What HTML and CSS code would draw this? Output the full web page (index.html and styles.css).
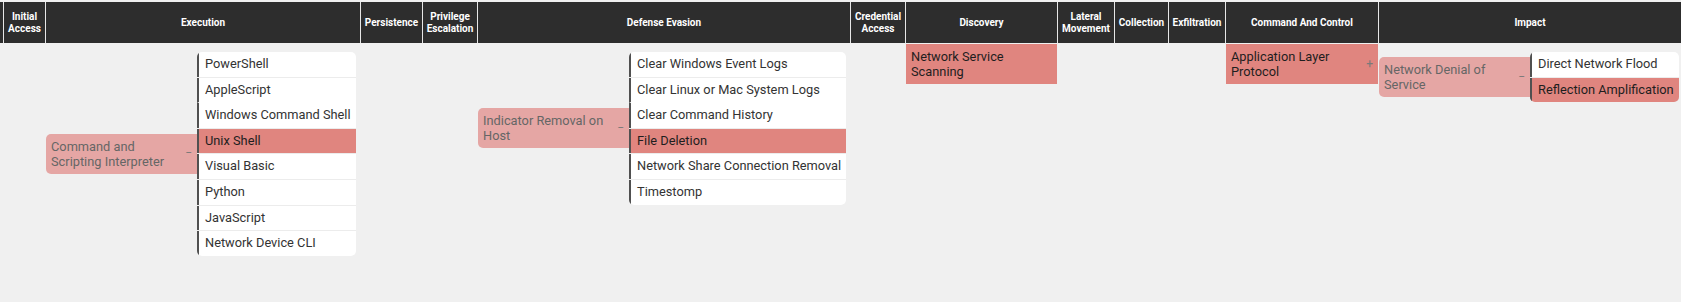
FILE: index.html
```html
<!DOCTYPE html>
<html lang="en">
<head>
  <meta charset="UTF-8">
  <meta name="viewport" content="width=device-width, initial-scale=1.0">
  <title>ATT&amp;CK Matrix</title>
  <link rel="stylesheet" href="styles.css">
</head>
<body>
  <div class="matrix">
    <!-- tactic headers -->
    <div class="tactic-head"></div>
    <div class="tactic-head">Initial Access</div>
    <div class="tactic-head">Execution</div>
    <div class="tactic-head">Persistence</div>
    <div class="tactic-head">Privilege Escalation</div>
    <div class="tactic-head">Defense Evasion</div>
    <div class="tactic-head">Credential Access</div>
    <div class="tactic-head">Discovery</div>
    <div class="tactic-head">Lateral Movement</div>
    <div class="tactic-head">Collection</div>
    <div class="tactic-head">Exfiltration</div>
    <div class="tactic-head">Command And Control</div>
    <div class="tactic-head">Impact</div>

    <!-- techniques -->
    <div class="tactic-cell"></div>
    <div class="tactic-cell"></div>
    <div class="tactic-cell">
      <div class="technique-group">
        <div class="technique parent">
          <span class="name">Command and Scripting Interpreter</span>
          <span class="toggle">&minus;</span>
        </div>
        <ul class="subtechniques">
          <li>PowerShell</li>
          <li>AppleScript</li>
          <li class="no-sep">Windows Command Shell</li>
          <li class="selected">Unix Shell</li>
          <li>Visual Basic</li>
          <li>Python</li>
          <li>JavaScript</li>
          <li>Network Device CLI</li>
        </ul>
      </div>
    </div>
    <div class="tactic-cell"></div>
    <div class="tactic-cell"></div>
    <div class="tactic-cell">
      <div class="technique-group">
        <div class="technique parent">
          <span class="name">Indicator Removal on Host</span>
          <span class="toggle">&minus;</span>
        </div>
        <ul class="subtechniques">
          <li>Clear Windows Event Logs</li>
          <li>Clear Linux or Mac System Logs</li>
          <li class="no-sep">Clear Command History</li>
          <li class="selected">File Deletion</li>
          <li>Network Share Connection Removal</li>
          <li>Timestomp</li>
        </ul>
      </div>
    </div>
    <div class="tactic-cell"></div>
    <div class="tactic-cell">
      <div class="technique selected">
        <span class="name">Network Service Scanning</span>
      </div>
    </div>
    <div class="tactic-cell"></div>
    <div class="tactic-cell"></div>
    <div class="tactic-cell"></div>
    <div class="tactic-cell">
      <div class="technique selected">
        <span class="name">Application Layer Protocol</span>
        <span class="toggle">+</span>
      </div>
    </div>
    <div class="tactic-cell">
      <div class="technique-group">
        <div class="technique parent">
          <span class="name">Network Denial of Service</span>
          <span class="toggle">&minus;</span>
        </div>
        <ul class="subtechniques">
          <li>Direct Network Flood</li>
          <li class="selected">Reflection Amplification</li>
        </ul>
      </div>
    </div>
  </div>
</body>
</html>
```

FILE: styles.css
```css
html, body {
  margin: 0;
  height: 100%;
}
body {
  font-family: Roboto, "Liberation Sans", sans-serif;
  background-color: #f0f0f0;
  color: #333;
}
.matrix {
  display: grid;
  grid-template-columns: 3px 41px 314px 61px 54px 372px 54px 151px 56px 53px 56px 152px 302px;
  column-gap: 1px;
  row-gap: 1px;
  padding-top: 2px;
  background-color: #f0f0f0;
}
.tactic-head {
  background-color: #2d2d2d;
  color: #fff;
  font-size: 10px;
  font-weight: bold;
  line-height: 12px;
  height: 41px;
  display: flex;
  align-items: center;
  justify-content: center;
  text-align: center;
  box-shadow: 1px 0 0 #e6e6e6;
}
.tactic-cell {
  min-width: 0;
}
.technique-group {
  display: flex;
  align-items: center;
}
.technique {
  display: flex;
  align-items: center;
  box-sizing: border-box;
  min-height: 40px;
  padding: 5px;
  font-size: 12.8px;
  line-height: 15px;
}
.technique .name {
  flex: 1;
}
.technique .toggle {
  font-size: 12px;
  color: #7a7a7a;
  margin-left: 4px;
}
.technique.parent {
  width: 151px;
  flex-shrink: 0;
  background-color: #e5a6a4;
  color: #666;
  border-radius: 5px 0 0 5px;
}
.technique.selected {
  background-color: #e0857f;
  color: #1e1e1e;
}
.subtechniques {
  list-style: none;
  margin: 8px 0;
  padding: 0;
  background-color: #ececec;
  border-radius: 5px;
  overflow: hidden;
  font-size: 12.8px;
}
.subtechniques li {
  height: 24.6px;
  line-height: 24.6px;
  margin-top: 1px;
  padding: 0 5px 0 6px;
  background-color: #fff;
  border-left: 2px solid #505050;
  white-space: nowrap;
}
.subtechniques li:first-child {
  margin-top: 0;
}
.subtechniques li.no-sep {
  margin-top: 0;
  border-top: 1px solid #fff;
}
.subtechniques li.selected {
  background-color: #e0857f;
  color: #1e1e1e;
}
```
